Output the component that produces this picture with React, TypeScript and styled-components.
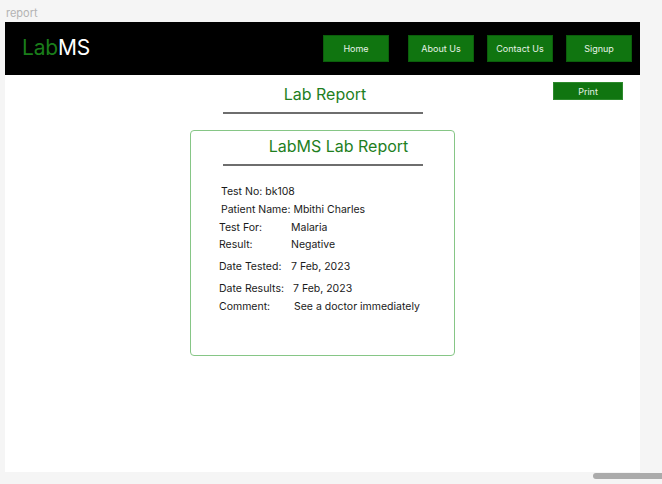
import styled, { createGlobalStyle } from "styled-components";

const GlobalStyle = createGlobalStyle`
  html, body {
    margin: 0;
    padding: 0;
    background: #f5f5f5;
    font-family: Inter, "Noto Sans", sans-serif;
    overflow: hidden;
  }
`;

const rows = [
  { label: "Test No:", value: "bk108", inline: true, space: 0, indent: 2 },
  { label: "Patient Name:", value: "Mbithi Charles", inline: true, space: 6, indent: 2 },
  { label: "Test For:", value: "Malaria", space: 6, indent: 0 },
  { label: "Result:", value: "Negative", space: 5, indent: 0 },
  { label: "Date Tested:", value: "7 Feb, 2023", space: 10, indent: 0 },
  { label: "Date Results:", value: "7 Feb, 2023", space: 10, indent: 0, valueShift: 2 },
  { label: "Comment:", value: "See a doctor immediately", space: 6, indent: 0, valueShift: 3 },
];

export default function App() {
  return (
    <Page>
      <GlobalStyle />
      <FrameLabel>report</FrameLabel>
      <Frame>
        <Header>
          <Logo>
            <LogoAccent>Lab</LogoAccent>MS
          </Logo>
          <Nav>
            <NavButton $wide>Home</NavButton>
            <NavButton>About Us</NavButton>
            <NavButton>Contact Us</NavButton>
            <NavButton>Signup</NavButton>
          </Nav>
        </Header>
        <Body>
          <TopRow>
            <PrintButton>Print</PrintButton>
          </TopRow>
          <PageTitle>Lab Report</PageTitle>
          <Rule />
          <Card>
            <CardTitle>LabMS Lab Report</CardTitle>
            <Rule />
            <Details>
              {rows.map((r) =>
                r.inline ? (
                  <Row key={r.label} $space={r.space} $indent={r.indent}>
                    {r.label} {r.value}
                  </Row>
                ) : (
                  <Row key={r.label} $space={r.space} $indent={r.indent}>
                    <Label>{r.label}</Label>
                    <Value $shift={r.valueShift ?? 0}>{r.value}</Value>
                  </Row>
                )
              )}
            </Details>
          </Card>
        </Body>
      </Frame>
      <ScrollThumb />
    </Page>
  );
}

const Page = styled.div`
  position: relative;
  width: 662px;
  height: 484px;
  padding-left: 5px;
  box-sizing: border-box;
`;

const FrameLabel = styled.div`
  height: 22px;
  padding-left: 1px;
  padding-top: 7px;
  box-sizing: border-box;
  font-size: 11px;
  line-height: 13px;
  color: #b3b3b3;
`;

const Frame = styled.div`
  width: 635px;
  height: 450px;
  background: #ffffff;
  display: flex;
  flex-direction: column;
`;

const Header = styled.div`
  height: 53px;
  background: #000000;
  display: flex;
  align-items: center;
  justify-content: space-between;
  padding: 0 8px 0 17px;
`;

const Logo = styled.div`
  font-size: 21px;
  color: #ffffff;
  letter-spacing: -0.2px;
  margin-top: -2px;
`;

const LogoAccent = styled.span`
  color: #1a7d1a;
`;

const Nav = styled.div`
  display: flex;
  gap: 13px;
`;

const NavButton = styled.div<{ $wide?: boolean }>`
  width: 66px;
  height: 27px;
  box-sizing: border-box;
  background: #107510;
  border: 1px solid #0b5e0b;
  color: #e6f2e6;
  font-size: 9px;
  display: flex;
  align-items: center;
  justify-content: center;
  margin-right: ${(p) => (p.$wide ? "6px" : "0")};
`;

const Body = styled.div`
  display: flex;
  flex-direction: column;
  align-items: center;
`;

const TopRow = styled.div`
  align-self: stretch;
  display: flex;
  justify-content: flex-end;
  align-items: flex-start;
  padding-right: 17px;
  height: 0;
  overflow: visible;
`;

const PrintButton = styled.div`
  flex-shrink: 0;
  margin-top: 7px;
  width: 70px;
  height: 18px;
  box-sizing: border-box;
  background: #107510;
  border: 1px solid #2d8a2d;
  color: #e6f2e6;
  font-size: 9px;
  display: flex;
  align-items: center;
  justify-content: center;
`;

const PageTitle = styled.div`
  margin-top: 9px;
  font-size: 16px;
  line-height: 20px;
  color: #1f7f1f;
  padding-left: 5px;
`;

const Rule = styled.div`
  width: 200px;
  height: 2px;
  background: #6e6e6e;
  margin-top: 8px;
`;

const Card = styled.div`
  margin-top: 16px;
  width: 265px;
  height: 226px;
  box-sizing: border-box;
  border: 1px solid #86c686;
  border-radius: 4px;
  display: flex;
  flex-direction: column;
  align-items: center;
  padding-top: 5px;
`;

const CardTitle = styled.div`
  font-size: 16px;
  line-height: 20px;
  color: #1f7f1f;
  padding-left: 32px;
`;

const Details = styled.div`
  align-self: stretch;
  display: flex;
  flex-direction: column;
  padding: 20px 0 0 28px;
`;

const Row = styled.div<{ $space: number; $indent: number }>`
  display: flex;
  font-size: 10.5px;
  line-height: 12px;
  color: #1a1a1a;
  margin-top: ${(p) => p.$space}px;
  padding-left: ${(p) => p.$indent}px;
  white-space: pre;
`;

const Label = styled.span`
  width: 72px;
`;

const Value = styled.span<{ $shift: number }>`
  padding-left: ${(p) => p.$shift}px;
`;

const ScrollThumb = styled.div`
  position: absolute;
  left: 593px;
  top: 473px;
  width: 75px;
  height: 6px;
  border-radius: 3px;
  background: #ababab;
`;
